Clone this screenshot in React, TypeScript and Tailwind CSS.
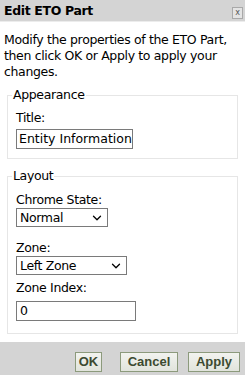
import { ChevronDown } from "lucide-react"

const font = { fontFamily: '"DejaVu Sans", Verdana, sans-serif' }

function Select({ value, width }: { value: string; width: string }) {
  return (
    <div className={`flex h-[19px] items-center justify-between border border-[#7a7a7a] bg-white pl-[3px] pr-[3px] text-[12.5px] text-black ${width}`}>
      <span>{value}</span>
      <ChevronDown className="h-[14px] w-[14px]" strokeWidth={2.2} />
    </div>
  )
}

export default function App() {
  return (
    <div className="flex h-[375px] w-[245px] flex-col bg-white text-[12.5px] leading-[16px] text-black tracking-[-0.35px]" style={font}>
      <div className="flex h-[22px] items-center justify-between border-b border-[#ececec] bg-[#d4d4d4] pl-[4px] pr-[2px]">
        <span className="text-[12.5px] font-bold text-black">Edit ETO Part</span>
        <div className="mt-[4px] flex h-[12px] w-[11px] items-center justify-center border border-[#a9a9a9] bg-[#e4e4e4] text-[8px] leading-none text-[#555]">x</div>
      </div>

      <div className="flex-1 px-[4px] pt-[10px]">
        <p>Modify the properties of the ETO Part, then click OK or Apply to apply your changes.</p>

        <fieldset className="mx-[3px] mt-[7px] border border-[#e6e6e6] px-[8px] pb-[9px] pt-0">
          <legend className="px-[1px] -ml-[4px]">Appearance</legend>
          <div className="mt-[7px]">Title:</div>
          <div className="mt-[3px] h-[20px] w-[117px] overflow-hidden whitespace-nowrap border border-[#7a7a7a] pl-[2px] leading-[18px] tracking-normal">Entity Information</div>
        </fieldset>

        <fieldset className="mx-[3px] mt-[9px] border border-[#e6e6e6] px-[8px] pb-[12px] pt-0">
          <legend className="px-[1px] -ml-[4px]">Layout</legend>
          <div className="mt-[8px]">Chrome State:</div>
          <div className="mt-0">
            <Select value="Normal" width="w-[92px]" />
          </div>
          <div className="mt-[13px]">Zone:</div>
          <div className="mt-0">
            <Select value="Left Zone" width="w-[111px]" />
          </div>
          <div className="mt-[5px]">Zone Index:</div>
          <div className="mt-[5px] h-[20px] w-[120px] border border-[#7a7a7a] pl-[3px] leading-[18px]">0</div>
        </fieldset>
      </div>

      <div className="flex h-[33px] items-start justify-end bg-[#d4d4d4] pr-[5px] pt-[10px]" style={{ fontFamily: '"Liberation Sans", Arial, sans-serif' }}>
        <button className="mr-[18px] h-[20px] w-[27px] border border-[#8c9a7c] bg-gradient-to-b from-[#f2f3ef] to-[#e1e4dc] text-[13px] font-bold tracking-normal text-[#3c4a30]">OK</button>
        <button className="mr-[10px] h-[20px] w-[58px] border border-[#8c9a7c] bg-gradient-to-b from-[#f2f3ef] to-[#e1e4dc] text-[13px] font-bold tracking-normal text-[#3c4a30]">Cancel</button>
        <button className="h-[20px] w-[52px] border border-[#8c9a7c] bg-gradient-to-b from-[#f2f3ef] to-[#e1e4dc] text-[13px] font-bold tracking-normal text-[#3c4a30]">Apply</button>
      </div>
    </div>
  )
}
